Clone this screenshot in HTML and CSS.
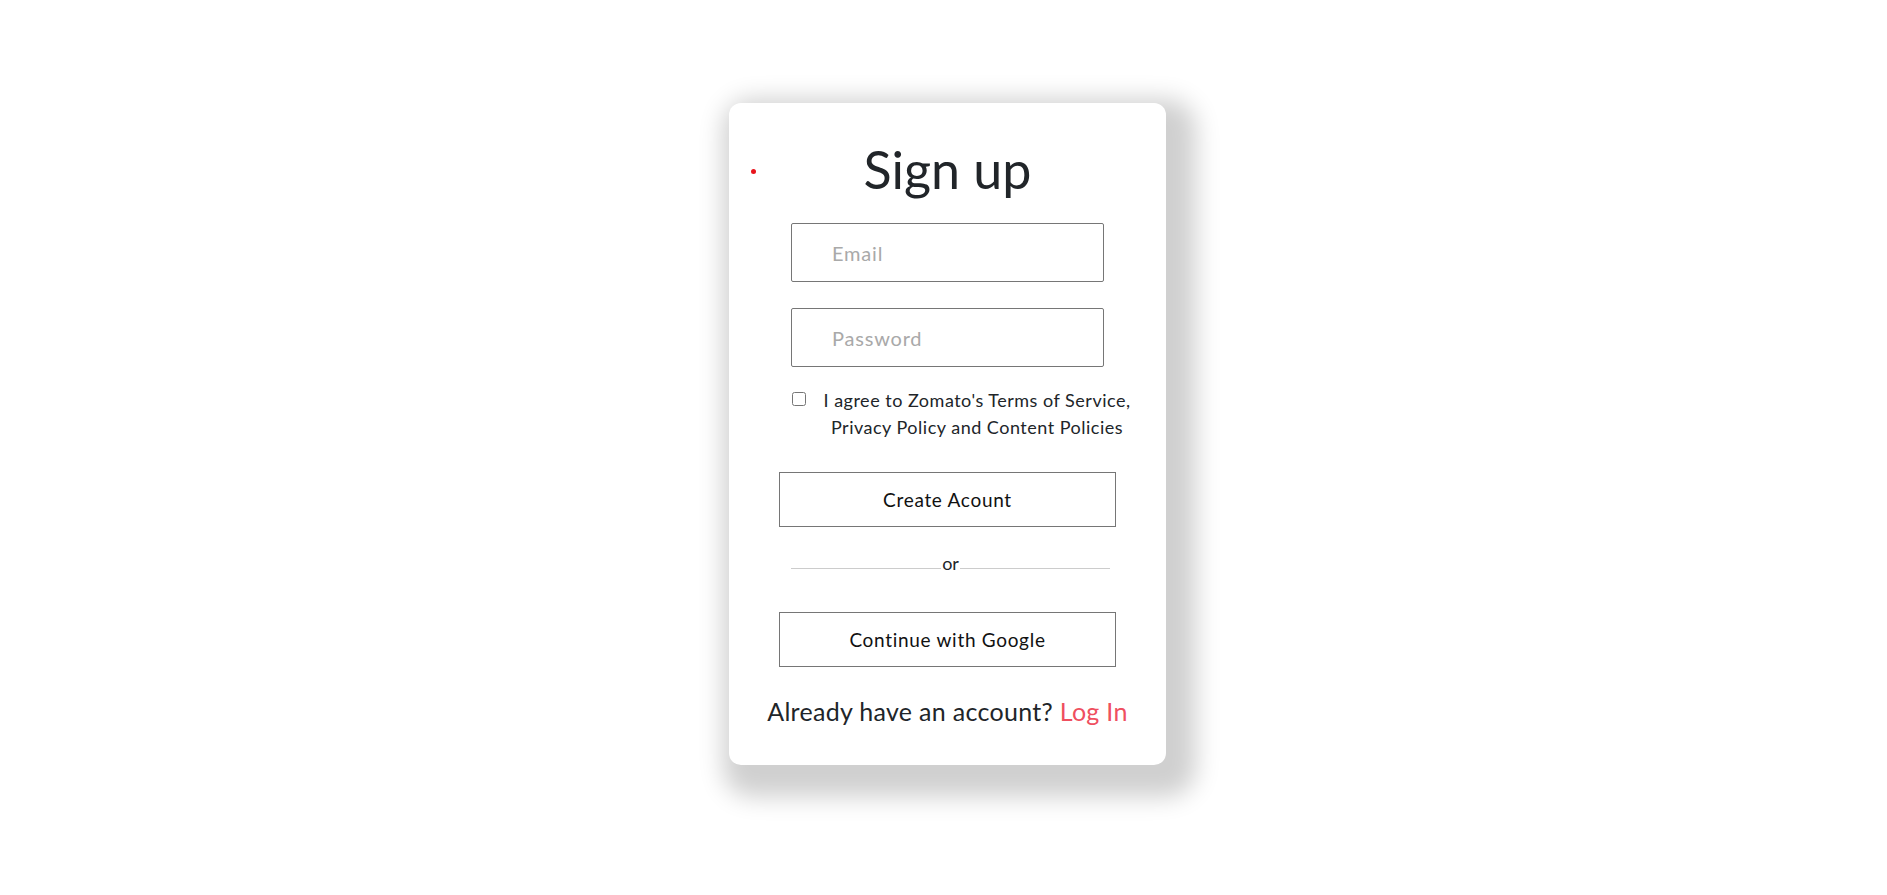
FILE: index.html
```html
<!DOCTYPE html>
<html lang="en">
<head>
<meta charset="utf-8">
<title>Sign up</title>
<link rel="stylesheet" href="styles.css">
</head>
<body>
<main class="page">
  <section class="card">
    <span class="dot"></span>
    <h1 class="title">Sign up</h1>
    <form class="form">
      <input class="field" type="email" placeholder="Email">
      <input class="field field-pass" type="password" placeholder="Password">
      <label class="agree">
        <input class="check" type="checkbox">
        <span class="agree-text">I agree to Zomato's Terms of Service,<br>Privacy Policy and Content Policies</span>
      </label>
      <button class="btn btn-create" type="button">Create Acount</button>
      <div class="divider"><span class="or">or</span></div>
      <button class="btn" type="button">Continue with Google</button>
    </form>
    <p class="login">Already have an account? <a class="login-link" href="#">Log In</a></p>
  </section>
</main>
</body>
</html>
```
FILE: styles.css
```css
* { box-sizing: border-box; }
html, body { margin: 0; padding: 0; background: #ffffff; }
body {
  font-family: "Lato", "Noto Sans", "Liberation Sans", sans-serif;
  color: #212529;
}
.page {
  display: flex;
  justify-content: center;
  padding: 103px 0 0 8px;
  min-height: 895px;
}
.card {
  position: relative;
  width: 437px;
  height: 662px;
  background: #fff;
  border-radius: 12px;
  box-shadow: 12px 14px 25px 18px #d0d0d0;
  display: flex;
  flex-direction: column;
  align-items: center;
  padding-top: 35px;
}
.dot {
  position: absolute;
  left: 22px;
  top: 66px;
  width: 5px;
  height: 5px;
  border-radius: 50%;
  background: #e8141c;
}
.title {
  margin: 0;
  font-size: 52px;
  font-weight: 400;
  line-height: 62px;
  color: #212529;
}
.form {
  display: flex;
  flex-direction: column;
  align-items: center;
  width: 100%;
}
.field {
  margin-top: 23px;
  width: 313px;
  height: 59px;
  border: 1px solid #767676;
  border-radius: 2px;
  padding: 0 0 0 40px;
  font-family: inherit;
  font-size: 20px;
  letter-spacing: 0.8px;
  color: #212529;
  outline: none;
}
.field-pass { margin-top: 26px; }
.field::placeholder { color: #a9a9a9; }
.agree {
  align-self: flex-start;
  margin: 20px 0 0 63px;
  display: flex;
  align-items: flex-start;
  gap: 8px;
  font-size: 18px;
  letter-spacing: 0.5px;
  line-height: 27px;
  color: #212529;
}
.check {
  margin: 5px 0 0 0;
  width: 14px;
  height: 14px;
  flex: none;
}
.agree-text {
  width: 326px;
  text-align: center;
}
.btn {
  width: 337px;
  height: 55px;
  background: #fff;
  border: 1px solid #767676;
  border-radius: 0;
  font-family: inherit;
  font-size: 19px;
  letter-spacing: 0.7px;
  color: #111;
  cursor: pointer;
}
.btn-create { margin-top: 31px; }
.divider {
  align-self: flex-start;
  margin: 26px 0 39px 62px;
  width: 319px;
  display: flex;
  align-items: flex-end;
  font-size: 18px;
  line-height: 20px;
}
.divider::before,
.divider::after {
  content: "";
  flex: 1;
  border-top: 1px solid #cccccc;
  margin-bottom: 4px;
}
.or { padding: 0 1px; color: #212529; }
.login {
  margin: 30px 0 0 0;
  font-size: 25px;
  letter-spacing: 0.3px;
  line-height: 29px;
  color: #212529;
}
.login-link { color: #ef4f5f; text-decoration: none; }
```
